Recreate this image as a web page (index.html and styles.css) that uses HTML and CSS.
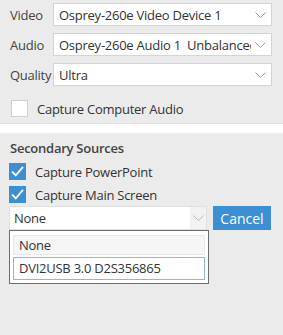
FILE: index.html
```html
<!DOCTYPE html>
<html lang="en">
<head>
<meta charset="UTF-8">
<title>Capture Settings</title>
<link rel="stylesheet" href="styles.css">
</head>
<body>
<div class="top">
  <div class="row">
    <span class="lbl">Video</span>
    <div class="combo"><span class="val">Osprey-260e Video Device 1</span><svg class="chev" width="11" height="6" viewBox="0 0 11 6"><path d="M0.5 0.5 L5.5 5.5 L10.5 0.5" fill="none" stroke="#999" stroke-width="1"/></svg></div>
  </div>
  <div class="row">
    <span class="lbl">Audio</span>
    <div class="combo"><span class="val">Osprey-260e Audio 1 &nbsp;Unbalanced</span><svg class="chev" width="11" height="6" viewBox="0 0 11 6"><path d="M0.5 0.5 L5.5 5.5 L10.5 0.5" fill="none" stroke="#999" stroke-width="1"/></svg></div>
  </div>
  <div class="row">
    <span class="lbl">Quality</span>
    <div class="combo"><span class="val">Ultra</span><svg class="chev" width="11" height="6" viewBox="0 0 11 6"><path d="M0.5 0.5 L5.5 5.5 L10.5 0.5" fill="none" stroke="#999" stroke-width="1"/></svg></div>
  </div>
  <label class="check first"><span class="box"></span>Capture Computer Audio</label>
</div>

<div class="sep"></div>

<div class="bottom">
  <div class="title">Secondary Sources</div>
  <label class="check"><span class="box on"><svg width="17" height="17" viewBox="0 0 17 17"><path d="M3 8.5 L6.8 12.3 L14 3.8" fill="none" stroke="#fff" stroke-width="1.8"/></svg></span>Capture PowerPoint</label>
  <label class="check"><span class="box on"><svg width="17" height="17" viewBox="0 0 17 17"><path d="M3 8.5 L6.8 12.3 L14 3.8" fill="none" stroke="#fff" stroke-width="1.8"/></svg></span>Capture Main Screen</label>
  <div class="pick">
    <div class="dd">
      <div class="combo open"><span class="val">None</span><span class="arrow"><svg width="11" height="6" viewBox="0 0 11 6"><path d="M0.5 0.5 L5.5 5.5 L10.5 0.5" fill="none" stroke="#bbb" stroke-width="1"/></svg></span></div>
      <div class="list">
        <div class="item">None</div>
        <div class="item sel">DVI2USB 3.0 D2S356865</div>
      </div>
    </div>
    <button class="cancel">Cancel</button>
  </div>
</div>
</body>
</html>
```

FILE: styles.css
```css
*{box-sizing:border-box;margin:0;padding:0}
body{background:#ebebeb;font-family:"Open Sans","Noto Sans",sans-serif;font-size:13px;letter-spacing:-0.25px;color:#333;width:283px;height:335px;overflow:hidden}
.top{padding:3px 11px 6px 10px;height:123px}
.row{display:flex;align-items:center;height:23px;margin-bottom:7px}
.lbl{width:43px;color:#444}
.combo{flex:1;height:23px;background:#fff;border:1px solid #d4d4d4;display:flex;align-items:center;padding-left:5px;overflow:hidden}
.val{flex:1;white-space:nowrap;overflow:hidden;text-overflow:clip}
.chev{margin:0 5px 0 4px;flex:none}
.check{display:flex;align-items:center;height:17px;gap:9px;color:#333}
.check.first{margin-top:14px;padding-left:1px}
.box{width:17px;height:17px;background:#fff;border:1px solid #cfcfcf;display:block;flex:none}
.box.on{background:#3d8fd3;border-color:#3d8fd3}
.box svg{display:block;margin:-1px}
.sep{height:10px;background:#fff;border-top:1px solid #e2e2e2}
.bottom{padding:6px 0 0 9px}
.title{font-weight:600;color:#444;height:22px;margin-bottom:2px;padding-left:1px}
.bottom .check{margin-bottom:6px}
.pick{display:flex;align-items:flex-start;gap:6px;margin-top:-3px}
.dd{width:198px}
.dd .combo{height:24px;border-color:#e0e0e0;padding-left:4px}
.arrow{width:16px;height:22px;background:#f2f2f2;display:flex;align-items:center;justify-content:center;flex:none}
.list{background:#fff;border:1px solid #6e6e6e;padding:4px 3px 3px 3px;width:200px}
.item{height:20px;line-height:18px;padding-left:5px;border:1px solid #e8e8e8;background:#f6f6f6}
.item.sel{height:23px;line-height:21px;background:#fff;border-color:#87b9dc;margin-top:2px}
.cancel{width:58px;height:24px;background:#3d8fd3;color:#fff;border:none;font:inherit;font-size:14px;letter-spacing:0}
```
